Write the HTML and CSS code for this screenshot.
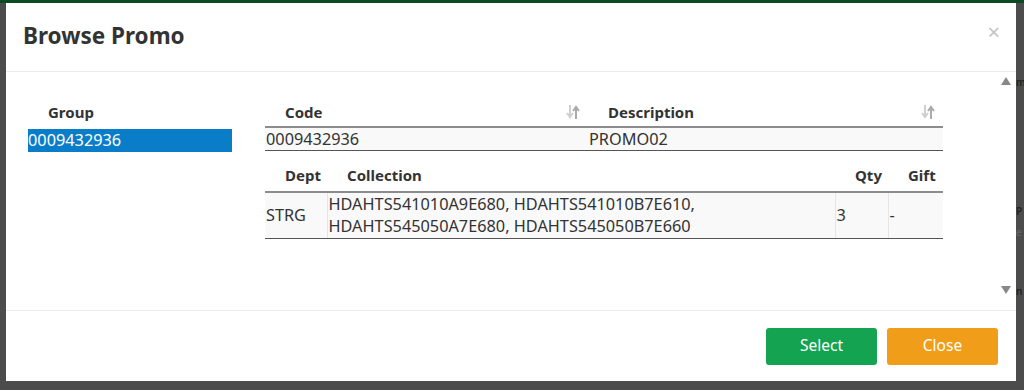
FILE: index.html
```html
<!DOCTYPE html>
<html lang="en">
<head>
  <meta charset="UTF-8" />
  <title>Browse Promo</title>
  <link rel="stylesheet" href="styles.css">
</head>
<body>
  <div class="topbar"></div>
  <div class="page-edge">
    <span class="edge-up"></span><span class="edge-txt t1">m</span>
    <span class="edge-txt t2">P</span>
    <span class="edge-txt t3">e</span>
    <span class="edge-down"></span><span class="edge-txt t4">n</span>
  </div>
  <div class="modal">
    <div class="modal-header">
      <h4 class="modal-title">Browse Promo</h4>
      <span class="modal-close">&times;</span>
    </div>
    <div class="modal-body">
      <div class="group-col">
        <div class="th">Group</div>
        <div class="group-item selected">0009432936</div>
      </div>
      <div class="detail-col">
        <table class="grid promo-grid">
          <colgroup><col class="c-code"><col class="c-desc"></colgroup>
          <thead>
            <tr>
              <th><div class="th-inner">Code <svg class="sort" viewBox="0 0 14 16" width="14" height="16"><path d="M4 1v11M1 9l3 4 3-4" fill="none" stroke="#cfcfcf" stroke-width="2"/><path d="M10 15V4M7 7l3-4 3 4" fill="none" stroke="#aaa" stroke-width="2"/></svg></div></th>
              <th><div class="th-inner">Description <svg class="sort" viewBox="0 0 14 16" width="14" height="16"><path d="M4 1v11M1 9l3 4 3-4" fill="none" stroke="#cfcfcf" stroke-width="2"/><path d="M10 15V4M7 7l3-4 3 4" fill="none" stroke="#aaa" stroke-width="2"/></svg></div></th>
            </tr>
          </thead>
          <tbody>
            <tr><td>0009432936</td><td>PROMO02</td></tr>
          </tbody>
        </table>
        <table class="grid item-grid">
          <colgroup><col class="c-dept"><col class="c-coll"><col class="c-qty"><col class="c-gift"></colgroup>
          <thead>
            <tr><th>Dept</th><th>Collection</th><th>Qty</th><th>Gift</th></tr>
          </thead>
          <tbody>
            <tr>
              <td>STRG</td>
              <td>HDAHTS541010A9E680, HDAHTS541010B7E610,<br>HDAHTS545050A7E680, HDAHTS545050B7E660</td>
              <td>3</td>
              <td>-</td>
            </tr>
          </tbody>
        </table>
      </div>
    </div>
    <div class="modal-footer">
      <button class="btn btn-select">Select</button>
      <button class="btn btn-close">Close</button>
    </div>
  </div>
</body>
</html>
```

FILE: styles.css
```css
* {
  margin: 0; padding: 0; box-sizing: border-box;
}
body {
  width: 1024px;
  height: 390px;
  overflow: hidden;
  background: #4c4c4c;
  font-family: 'Noto Sans', 'Open Sans', sans-serif;
  font-size: 15px;
  color: #333;
  position: relative;
}
.topbar {
  height: 3px;
  background: #0b4a26;
}
.page-edge {
  position: absolute;
  top: 0; right: 0;
  width: 30px;
  height: 390px;
  font-size: 10px;
  color: #222;
}
.edge-up, .edge-down {
  position: absolute;
  left: 7px;
  width: 0; height: 0;
  border-left: 5px solid transparent;
  border-right: 5px solid transparent;
  z-index: 5;
}
.edge-up { top: 77px; border-bottom: 8px solid #888; }
.edge-down { top: 286px; border-top: 8px solid #888; }
.edge-txt {
  position: absolute;
  left: 22px;
  font-weight: 600;
  line-height: 12px;
}
.t1 { top: 76px; }
.t2 { top: 205px; }
.t3 { top: 226px; font-weight: 400; color: #666; }
.t4 { top: 285px; }
.modal {
  margin: 0 8px 0 6px;
  height: 378px;
  background: #fff;
  display: flex;
  flex-direction: column;
}
.modal-header {
  height: 69px;
  padding: 0 17px;
  border-bottom: 1px solid #ececec;
  display: flex;
  align-items: center;
  justify-content: space-between;
}
.modal-title {
  font-size: 22.5px;
  font-weight: 700;
  color: #333;
  margin-top: -3px;
}
.modal-close {
  font-size: 22px;
  color: #c4c4c4;
  margin-top: -12px;
  margin-right: -1px;
}
.modal-body {
  flex: 1;
  display: flex;
  padding: 28px 73px 0 22px;
  gap: 33px;
}
.group-col {
  width: 204px;
}
.th {
  height: 28px;
  padding: 0 0 0 20px;
  font-weight: 700;
  line-height: 25px;
}
.group-item {
  height: 23px;
  line-height: 22px;
  margin-top: 1px;
  font-size: 16.3px;
}
.group-item.selected {
  background: #0a7dc8;
  color: #fff;
}
.detail-col {
  flex: 1;
}
.grid {
  width: 100%;
  border-collapse: collapse;
  table-layout: fixed;
}
.grid th {
  text-align: left;
  font-weight: 700;
  padding: 0 8px 2px 20px;
  height: 27px;
  border-bottom: 2px solid #8c8c8c;
}
.th-inner {
  display: flex;
  align-items: center;
  justify-content: space-between;
}
.sort { display: block; }
.grid td {
  padding: 0 1px;
  height: 23px;
  background: #f9f9f9;
  border-bottom: 1px solid #555;
  line-height: 22px;
  font-size: 16.3px;
}
.c-code { width: 323px; }
.promo-grid { margin-bottom: 10px; }
.item-grid th { height: 31px; }
.item-grid td {
  border-left: 1px solid #e6e6e6;
  height: 46px;
}
.item-grid td:first-child { border-left: none; }
.c-dept { width: 62px; }
.c-qty { width: 53px; }
.c-gift { width: 55px; }
.modal-footer {
  height: 71px;
  border-top: 1px solid #ececec;
  display: flex;
  justify-content: flex-end;
  align-items: flex-start;
  gap: 10px;
  padding: 17px 18px 0 0;
}
.btn {
  width: 111px;
  height: 37px;
  border: none;
  border-radius: 3px;
  font-family: inherit;
  font-size: 15.5px;
  color: #fff;
  padding-bottom: 3px;
}
.btn-select { background: #14a350; }
.btn-close { background: #f09e19; }
```
